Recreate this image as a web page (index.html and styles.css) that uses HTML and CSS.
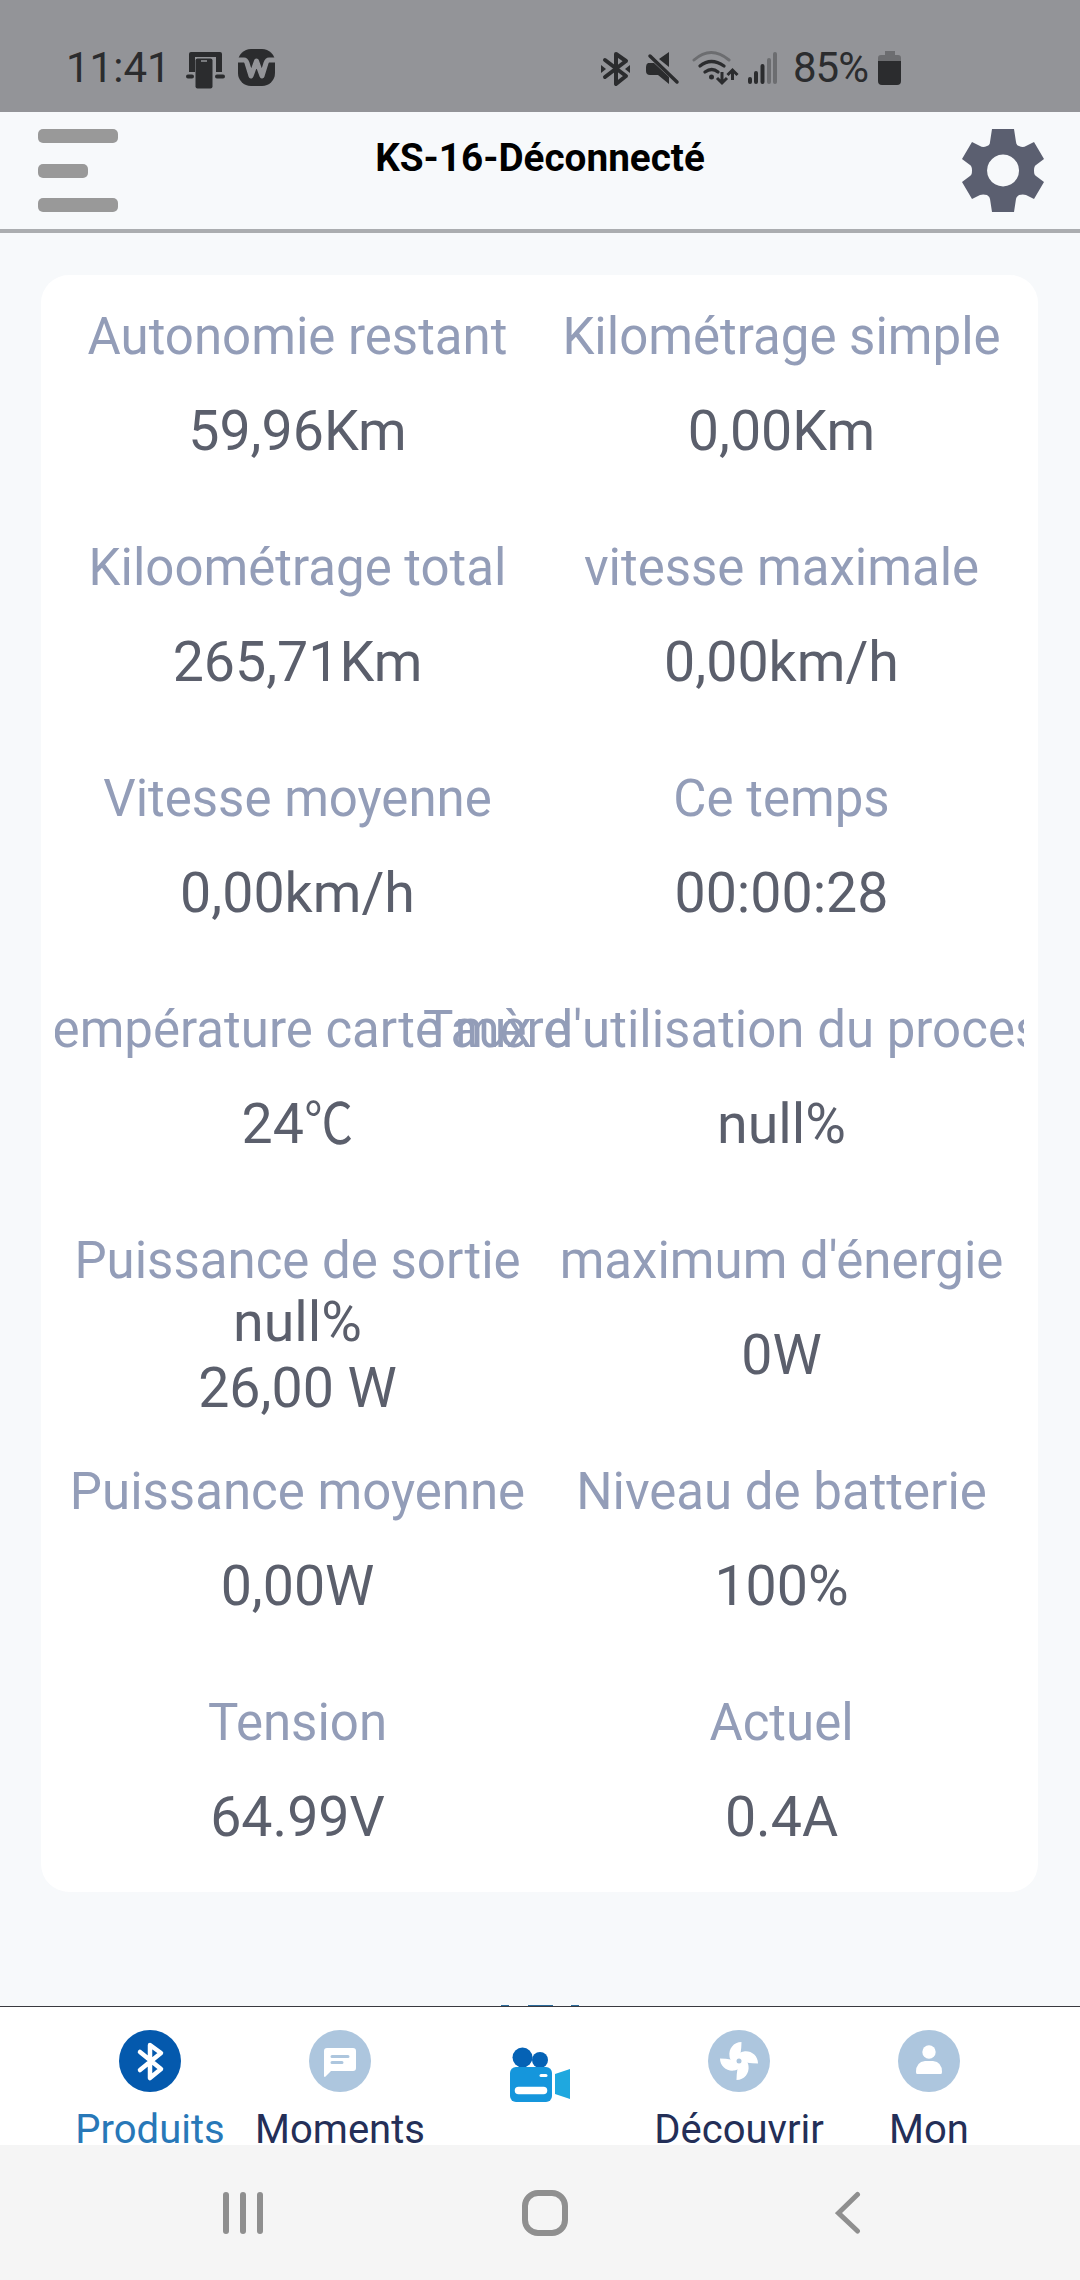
FILE: index.html
```html
<!DOCTYPE html>
<html lang="fr">
<head>
    <meta charset="UTF-8">
    <title>KS-16</title>
    <link rel="stylesheet" href="styles.css">
</head>
<body>
    <div class="status">
        <span class="time">11:41</span>
        <svg class="status-left" width="92" height="44" viewBox="184 46 92 44">
            <path fill="#2b2c2e" d="M191 52h29q2 0 2 2v18h-6V57h-21v15h-6V54q0-2 2-2z"/>
            <path stroke="#2b2c2e" stroke-width="4" stroke-linecap="round" d="M188 76.500h4M217 76.500h6"/>
            <rect x="195.500" y="58.500" width="17" height="30" rx="2" fill="#2b2c2e"/>
            <path stroke="#939498" stroke-width="1.500" d="M201 61h6"/>
            <rect x="238" y="49" width="37" height="37" rx="13" fill="#2b2c2e"/>
            <path fill="none" stroke="#939498" stroke-width="5" stroke-linejoin="round" d="M236 60h8q2 0 3 3l4 13 5.500-15 5.500 15 4-13q1-3 3-3h8"/>
        </svg>
        <svg class="status-right" width="200" height="44" viewBox="596 46 200 44">
            <path fill="none" stroke="#2b2c2e" stroke-width="4" stroke-linejoin="round" stroke-linecap="round" d="M605 60l21 16-10 8V54l10 7-21 16"/>
            <path fill="#2b2c2e" d="M601 65l5 4-5 4zM630 65l-5 4 5 4z"/>
            <path fill="#2b2c2e" d="M669 52v15l-10-8zM648 63h6l15 14v7l-11-9h-8q-4 0-4-4v-4q0-3 2-4z"/>
            <path stroke="#2b2c2e" stroke-width="3.500" stroke-linecap="round" d="M650 56l27 26"/>
            <path fill="none" stroke="#6c6d70" stroke-width="3" stroke-linecap="round" d="M694 60q17-15 35 0"/>
            <path fill="none" stroke="#2b2c2e" stroke-width="3.300" stroke-linecap="round" d="M700 66q11-9 24 0M705 72q7-5 13 0"/>
            <circle cx="711.500" cy="77" r="2.500" fill="#2b2c2e"/>
            <path fill="none" stroke="#2b2c2e" stroke-width="3" d="M722 72v11M717 78l5 5 5-5M732.500 80V70M727.500 75l5-5 5 5"/>
            <path stroke="#2b2c2e" stroke-width="4" stroke-linecap="round" d="M750 79v3M756 73v9M762.500 66v16"/>
            <path stroke="#6c6d70" stroke-width="4" stroke-linecap="round" d="M769 60v22M775 54v28"/>
        </svg>
        <span class="percent">85%</span>
        <svg class="battery" width="24" height="36" viewBox="0 0 24 36">
            <path fill="#6c6d70" d="M7 1h10v4h3q3 0 3 3v4H0V8q0-3 3-3h4z"/>
            <path fill="#2b2c2e" d="M0 11h23v20q0 4-4 4H4q-4 0-4-4z"/>
        </svg>
    </div>

    <div class="header">
        <div class="menu"><i></i><i class="short"></i><i></i></div>
        <h1>KS-16-Déconnecté</h1>
        <svg class="gear" width="82" height="83" viewBox="0 0 82 83">
            <path fill="#5b5f70" fill-rule="evenodd" d="M30 0h22l2 13q0 3 3 4 4 2 7 0l8-4 10 17-8 6q-2 1-2 5.500t2 5.500l8 6-10 17-8-4q-3-1-7 0-3 2-3 4l-2 13H30l-2-13q0-2-3-4-4-1-7 0l-8 4L0 53l8-6q2-1 2-5.500T8 36l-8-6 10-17 8 4q3 2 7 0 3-1 3-4zM41 25.500a16 16 0 1 0 .1 0z"/>
        </svg>
    </div>

    <div class="content">
        <div class="card">
            <div class="item"><p class="name">Autonomie restant</p><div class="value">59,96Km</div></div>
            <div class="item"><p class="name">Kilométrage simple</p><div class="value">0,00Km</div></div>
            <div class="item"><p class="name">Kiloométrage total</p><div class="value">265,71Km</div></div>
            <div class="item"><p class="name">vitesse maximale</p><div class="value">0,00km/h</div></div>
            <div class="item"><p class="name">Vitesse moyenne</p><div class="value">0,00km/h</div></div>
            <div class="item"><p class="name">Ce temps</p><div class="value">00:00:28</div></div>
            <div class="item"><p class="name">Température carte mère</p><div class="value"><p>24<span class="unit">℃</span></p></div></div>
            <div class="item"><p class="name">Taux d'utilisation du processeur</p><div class="value">null%</div></div>
            <div class="item"><p class="name">Puissance de sortie</p><div class="value">null%<br>26,00 W</div></div>
            <div class="item"><p class="name">maximum d'énergie</p><div class="value">0W</div></div>
            <div class="item"><p class="name">Puissance moyenne</p><div class="value">0,00W</div></div>
            <div class="item"><p class="name">Niveau de batterie</p><div class="value">100%</div></div>
            <div class="item"><p class="name">Tension</p><div class="value">64.99V</div></div>
            <div class="item"><p class="name">Actuel</p><div class="value">0.4A</div></div>
        </div>
        <div class="peek"><i></i><i class="wide"></i><i></i></div>
    </div>

    <div class="tabs">
        <div class="tab active">
            <svg width="62" height="62" viewBox="0 0 62 62">
                <circle cx="31" cy="31" r="31" fill="#0459ad"/>
                <path fill="none" stroke="#fff" stroke-width="4.500" stroke-linecap="round" stroke-linejoin="round" d="M21 22l21 17-11 9V15l11 8-21 17"/>
            </svg>
            <span>Produits</span>
        </div>
        <div class="tab">
            <svg width="62" height="62" viewBox="0 0 62 62">
                <circle cx="31" cy="31" r="31" fill="#adc6de"/>
                <path fill="#fff" d="M18 18h26q3 0 3 3v17q0 3-3 3H22l-6 6q-1 0-1-1V21q0-3 3-3z"/>
                <path stroke="#adc6de" stroke-width="3" stroke-linecap="round" d="M23 26.500h16M23 32.500h10"/>
            </svg>
            <span>Moments</span>
        </div>
        <div class="tab camera">
            <svg width="62" height="56" viewBox="0 0 62 56">
                <circle cx="13.500" cy="10.500" r="10" fill="#0562b5"/>
                <circle cx="31" cy="13" r="8" fill="#0562b5"/>
                <rect x="1" y="20" width="42" height="35" rx="6" fill="#1596dc"/>
                <path fill="#1fa8df" d="M46 27l15-5v30l-15-5z"/>
                <path stroke="#fff" stroke-linecap="round" stroke-width="7.500" d="M9.500 43.500h25"/>
                <path stroke="#fff" stroke-linecap="round" stroke-width="3" d="M32 28.500h5"/>
            </svg>
        </div>
        <div class="tab">
            <svg width="62" height="62" viewBox="0 0 62 62">
                <circle cx="31" cy="31" r="31" fill="#adc6de"/>
                <g fill="#fff">
                    <path id="blade" d="M33.500 12c-8 0-13 7-12 14 0 4 4 8 9.500 5 1-5 2.500-11 2.500-19z"/>
                    <use href="#blade" transform="rotate(90 31 31)"/>
                    <use href="#blade" transform="rotate(180 31 31)"/>
                    <use href="#blade" transform="rotate(270 31 31)"/>
                </g>
                <circle cx="31" cy="31" r="2.500" fill="#adc6de"/>
            </svg>
            <span>Découvrir</span>
        </div>
        <div class="tab">
            <svg width="62" height="62" viewBox="0 0 62 62">
                <circle cx="31" cy="31" r="31" fill="#adc6de"/>
                <circle cx="31" cy="22" r="6.700" fill="#fff"/>
                <path fill="#fff" d="M18 42q0-10 9-11h8q9 1 9 11 0 2-1 2H19q-1 0-1-2z"/>
            </svg>
            <span>Mon</span>
        </div>
    </div>

    <div class="navbar">
        <div class="recent"><i></i><i></i><i></i></div>
        <div class="home"></div>
        <svg width="26" height="44" viewBox="0 0 26 44">
            <path fill="none" stroke="#8f8f8f" stroke-width="5" stroke-linecap="round" d="M22.500 3.500l-19 18.500 19 18"/>
        </svg>
    </div>
</body>
</html>
```
FILE: styles.css
```css
* {
    margin: 0;
    padding: 0;
    box-sizing: border-box;
}
body {
    width: 1080px;
    height: 2280px;
    overflow: hidden;
    display: flex;
    flex-direction: column;
    background: #f7f9fb;
    font-family: Roboto, "Noto Sans CJK SC", sans-serif;
}
svg {
    display: block;
    flex: none;
}
.status {
    height: 112px;
    padding: 24px 0 0 66px;
    display: flex;
    align-items: center;
    background: #939498;
    color: #2b2c2e;
    font-size: 42px;
}
.time {
    width: 118px;
    margin-top: -2px;
}
.status-right {
    margin-left: 320px;
}
.percent {
    width: 84px;
    margin: -2px 1px 0 -3px;
    letter-spacing: -1px;
}
.header {
    height: 121px;
    padding: 17px 36px 0 38px;
    display: flex;
    justify-content: space-between;
    border-bottom: 4px solid #abadb0;
}
.menu {
    width: 80px;
    height: 83px;
    display: flex;
    flex-direction: column;
    justify-content: space-between;
}
.menu i {
    height: 14px;
    border-radius: 5px;
    background: #999;
}
.menu .short {
    width: 50px;
}
.header h1 {
    margin-top: 6px;
    line-height: 46px;
    font-size: 38.7px;
    font-weight: bold;
    color: #000;
}
.content {
    flex: 1;
    padding: 42px 42px 0 41px;
    position: relative;
}
.card {
    height: 1617px;
    display: grid;
    grid-template-columns: 484px 484px;
    grid-auto-rows: 231px;
    border: solid #fff;
    border-width: 0 14px;
    border-radius: 28px;
    background: #fff;
    overflow: hidden;
    text-align: center;
}
.item {
    padding: 31px 0 0 1px;
    display: flex;
    flex-direction: column;
    align-items: center;
}
.name {
    line-height: 62px;
    font-size: 51px;
    white-space: nowrap;
    color: #939db8;
}
.value {
    height: 128px;
    display: flex;
    flex-direction: column;
    justify-content: center;
    line-height: 66px;
    font-size: 55.5px;
    color: #5b5f6c;
}
.unit {
    display: inline-block;
    margin: 0 -3px;
    transform: scaleX(.88);
}
/* top of the round button hidden under the tab bar */
.peek {
    position: absolute;
    left: 501px;
    bottom: 0;
    width: 78px;
    display: flex;
    justify-content: space-between;
}
.peek i {
    width: 8px;
    height: 1px;
    background: #2b6a9a;
}
.peek .wide {
    width: 25px;
}
.tabs {
    height: 139px;
    padding: 23px 56px 0 55px;
    display: flex;
    border-top: 1px solid #3a3a40;
    background: #fff;
    overflow: hidden;
}
.tab {
    width: 190px;
    display: flex;
    flex-direction: column;
    align-items: center;
    font-size: 40px;
    color: #242f58;
}
.tab span {
    margin-top: 14px;
    line-height: 47px;
}
.active {
    color: #2878b8;
}
.camera {
    width: 209px;
    padding-top: 17px;
}
.navbar {
    height: 135px;
    padding: 0 219px 0 223px;
    display: flex;
    align-items: center;
    background: #f5f5f5;
}
.recent {
    width: 40px;
    height: 42px;
    display: flex;
    justify-content: space-between;
}
.recent i {
    width: 6px;
    border-radius: 3px;
    background: #8f8f8f;
}
.home {
    width: 46px;
    height: 46px;
    margin: 0 267px 0 259px;
    border: 6px solid #8f8f8f;
    border-radius: 16px;
}
```
